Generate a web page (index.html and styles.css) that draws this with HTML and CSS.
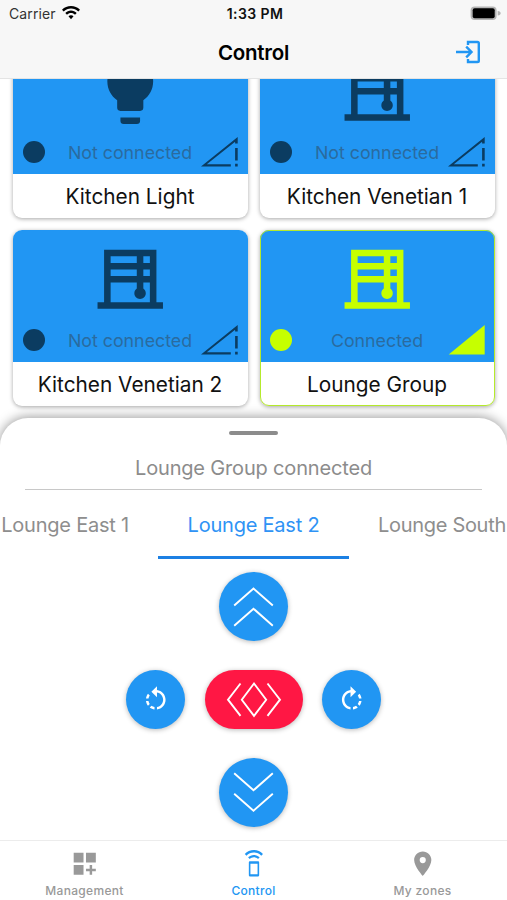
FILE: index.html
```html
<!DOCTYPE html>
<html lang="en">
<head>
    <meta charset="UTF-8">
    <meta name="viewport" content="width=device-width, initial-scale=1.0">
    <title>Control</title>
    <link rel="stylesheet" href="styles.css">
</head>
<body>
    <!-- Shared icons -->
    <svg class="sprite">
        <symbol id="blinds" viewBox="0 0 24 24">
            <path d="M20 19V3H4v16H2v2h20v-2zM16 9h2v2h-2zM14 11H6V9h8zM18 7h-2V5h2zM14 5v2H6V5zM6 19v-6h8v1.82c-.45.32-.75.84-.75 1.43 0 .97.78 1.75 1.75 1.75s1.75-.78 1.75-1.75c0-.59-.3-1.12-.75-1.43V13h2v6z"/>
        </symbol>
        <symbol id="bulb" viewBox="0 0 24 24">
            <path d="M12 2A7 7 0 0 0 5 9c0 2.38 1.19 4.47 3 5.74V17a1 1 0 0 0 1 1h6a1 1 0 0 0 1-1v-2.26c1.81-1.27 3-3.36 3-5.74a7 7 0 0 0-7-7zM9 21a1 1 0 0 0 1 1h4a1 1 0 0 0 1-1v-1H9z"/>
        </symbol>
        <symbol id="signal-off" viewBox="0 0 37 30">
            <path fill-rule="evenodd" d="M0 29.5L36.7 0v6.5h-2.6V4.8L5.8 27.2h24v2.3zM34.1 11h2.6v12.5h-2.6zM34.1 26.8h2.6v2.7h-2.6z"/>
        </symbol>
        <symbol id="signal-on" viewBox="0 0 37 30">
            <path d="M.7 29.5L36.7 0v29.5z"/>
        </symbol>
    </svg>

    <div class="screen">
        <header class="header">
            <div class="status-bar">
                <div class="carrier">
                    Carrier
                    <svg width="18" height="14" viewBox="0 0 18 14">
                        <path d="M9 0C5.6 0 2.4 1.3 0 3.7l1.7 1.8C3.7 3.6 6.2 2.5 9 2.5s5.3 1.1 7.3 3L18 3.7C15.6 1.3 12.4 0 9 0z"/>
                        <path d="M9 4.6c-2.2 0-4.2.9-5.700 2.400L5 8.800c1.100-1 2.500-1.700 4-1.700s2.900.7 4 1.700L14.700 7C13.200 5.500 11.200 4.600 9 4.600z"/>
                        <path d="M9 9.200c-1 0-1.900.4-2.500 1.100L9 13.300l2.500-3C10.900 9.600 10 9.200 9 9.200z"/>
                    </svg>
                </div>
                <div class="time">1:33 PM</div>
                <svg class="battery" width="31" height="15" viewBox="0 0 31 15">
                    <rect x=".6" y=".6" width="26" height="13.400" rx="4" fill="#b4b4b4"/>
                    <path d="M27.700 5c2 .3 3 1.200 3 2.300s-1 2-3 2.300z" fill="#b4b4b4"/>
                    <rect x="2.700" y="2.300" width="22" height="10" rx="2"/>
                </svg>
            </div>
            <div class="title-bar">
                <h1>Control</h1>
                <svg class="login" width="26" height="24" viewBox="0 0 26 24">
                    <path d="M13 5V2h9.500q1.300 0 1.300 1.300v17.400q0 1.300-1.300 1.300H13v-3M1 12h15.500M11.200 6.700l5.300 5.300-5.300 5.300"/>
                </svg>
            </div>
        </header>

        <main class="devices">
            <div class="card">
                <div class="card-image">
                    <svg class="card-icon"><use href="#bulb"/></svg>
                    <div class="card-status">
                        <span class="dot"></span>
                        <span class="state">Not connected</span>
                        <svg class="signal"><use href="#signal-off"/></svg>
                    </div>
                </div>
                <div class="card-name">Kitchen Light</div>
            </div>
            <div class="card">
                <div class="card-image">
                    <svg class="card-icon"><use href="#blinds"/></svg>
                    <div class="card-status">
                        <span class="dot"></span>
                        <span class="state">Not connected</span>
                        <svg class="signal"><use href="#signal-off"/></svg>
                    </div>
                </div>
                <div class="card-name">Kitchen Venetian 1</div>
            </div>
            <div class="card">
                <div class="card-image">
                    <svg class="card-icon"><use href="#blinds"/></svg>
                    <div class="card-status">
                        <span class="dot"></span>
                        <span class="state">Not connected</span>
                        <svg class="signal"><use href="#signal-off"/></svg>
                    </div>
                </div>
                <div class="card-name">Kitchen Venetian 2</div>
            </div>
            <div class="card connected">
                <div class="card-image">
                    <svg class="card-icon"><use href="#blinds"/></svg>
                    <div class="card-status">
                        <span class="dot"></span>
                        <span class="state">Connected</span>
                        <svg class="signal"><use href="#signal-on"/></svg>
                    </div>
                </div>
                <div class="card-name">Lounge Group</div>
            </div>
        </main>

        <section class="sheet">
            <div class="handle"></div>
            <div class="sheet-title">Lounge Group connected</div>
            <div class="tabs">
                <div class="tab prev">Lounge East 1</div>
                <div class="tab active">Lounge East 2</div>
                <div class="tab next">Lounge South</div>
            </div>
            <div class="controls">
                <button class="btn big" aria-label="Up">
                    <svg width="69" height="69" viewBox="0 0 69 69">
                        <path d="M15.200 33.500l19.300-17 19.300 17M15.200 53.700l19.300-17 19.300 17"/>
                    </svg>
                </button>
                <div class="controls-row">
                    <button class="btn small" aria-label="Rotate left">
                        <svg width="29.500" height="29.500" viewBox="0 0 24 24">
                            <path d="M7.110 8.530L5.700 7.110C4.800 8.270 4.240 9.610 4.070 11h2.020c.14-.87.49-1.720 1.020-2.470zM6.090 13H4.070c.17 1.390.72 2.730 1.620 3.890l1.410-1.420c-.52-.75-.87-1.590-1.010-2.470zm1.010 5.320c1.160.9 2.510 1.440 3.900 1.610V17.900c-.87-.15-1.710-.49-2.460-1.030L7.100 18.320zM13 4.070V1L8.450 5.550 13 10V6.090c2.840.48 5 2.940 5 5.910s-2.160 5.430-5 5.910v2.020c3.950-.49 7-3.850 7-7.930s-3.050-7.440-7-7.930z"/>
                        </svg>
                    </button>
                    <button class="btn stop" aria-label="Stop">
                        <svg width="98" height="59" viewBox="0 0 98 59">
                            <path d="M35.500 13.500L23 29.700l12.500 16.200M49 13.500l12.200 16.200L49 45.900 36.800 29.700zM62.500 13.500L75 29.700 62.500 45.900"/>
                        </svg>
                    </button>
                    <button class="btn small" aria-label="Rotate right">
                        <svg width="29.500" height="29.500" viewBox="0 0 24 24">
                            <path d="M15.550 5.550L11 1v3.070C7.060 4.560 4 7.920 4 12s3.050 7.440 7 7.930v-2.020c-2.840-.48-5-2.940-5-5.910s2.160-5.430 5-5.910V10l4.550-4.450zM19.930 11c-.17-1.390-.72-2.730-1.620-3.890l-1.420 1.420c.54.75.88 1.600 1.020 2.470h2.020zM13 17.900v2.020c1.390-.17 2.740-.71 3.900-1.610l-1.440-1.440c-.75.54-1.590.89-2.460 1.030zm3.890-2.420l1.420 1.410c.9-1.160 1.450-2.500 1.620-3.890h-2.020c-.14.87-.48 1.720-1.020 2.480z"/>
                        </svg>
                    </button>
                </div>
                <button class="btn big" aria-label="Down">
                    <svg width="69" height="69" viewBox="0 0 69 69">
                        <path d="M15.200 15.300l19.300 17 19.300-17M15.200 35.700l19.300 17 19.300-17"/>
                    </svg>
                </button>
            </div>
        </section>

        <nav class="nav">
            <div class="nav-item">
                <svg viewBox="0 0 24 24"><path d="M3 3h8v8H3zM13 3h8v8h-8zM3 13h8v8H3zM16 13h2v3h3v2h-3v3h-2v-3h-3v-2h3z"/></svg>
                Management
            </div>
            <div class="nav-item active">
                <svg viewBox="0 0 24 24">
                    <path fill-rule="evenodd" d="M9 10h6.400c.55 0 1 .45 1 1v10.400c0 .55-.45 1-1 1H9c-.55 0-1-.45-1-1V11c0-.55.45-1 1-1zm.3 2v8.600h5.800V12z"/>
                    <path d="M7.400 6.800l1.300 1.400c.9-.8 2.100-1.400 3.400-1.400s2.500.6 3.400 1.400l1.300-1.400c-1.200-1.100-2.900-1.900-4.700-1.900s-3.500.8-4.700 1.900zM12.100.9c-2.900 0-5.500 1.200-7.400 3.100l1.400 1.400c1.500-1.500 3.700-2.500 6-2.500s4.500 1 6 2.500L19.500 4c-1.900-1.900-4.500-3.100-7.400-3.100z"/>
                </svg>
                Control
            </div>
            <div class="nav-item">
                <svg viewBox="0 0 24 24"><path d="M12 2C8.130 2 5 5.130 5 9c0 5.250 7 13 7 13s7-7.750 7-13c0-3.870-3.130-7-7-7zm0 9.500a2.500 2.500 0 1 1 0-5 2.500 2.500 0 0 1 0 5z"/></svg>
                My zones
            </div>
        </nav>
    </div>
</body>
</html>
```
FILE: styles.css
```css
* {
    box-sizing: border-box;
}
body {
    font-family: Inter, 'Liberation Sans', sans-serif;
    margin: 0;
    background-color: #fff;
    color: #111;
}
.sprite {
    display: none;
}
.screen {
    display: flex;
    flex-direction: column;
    height: 900px;
    overflow: hidden;
}

/* Header */
.header {
    height: 79px;
    flex-shrink: 0;
    background: #f7f7f7;
    border-bottom: 1px solid #e4e4e4;
}
.status-bar {
    display: grid;
    grid-template-columns: 1fr auto 1fr;
    align-items: center;
    height: 27px;
    padding: 0 6px 0 9px;
    font-size: 14px;
}
.carrier {
    display: flex;
    align-items: center;
    gap: 6px;
    letter-spacing: 0.1px;
    color: #333;
}
.carrier svg {
    fill: #000;
    margin-top: -2px;
}
.time {
    font-weight: 600;
    letter-spacing: 0.4px;
}
.battery {
    justify-self: end;
}
.title-bar {
    display: grid;
    grid-template-columns: 1fr auto 1fr;
    align-items: center;
    height: 50px;
    padding: 0 26px;
}
.title-bar h1 {
    grid-column: 2;
    margin: 0;
    font-size: 20.5px;
    font-weight: 600;
    letter-spacing: -0.25px;
    color: #000;
}
.login {
    justify-self: end;
    fill: none;
    stroke: #2196f3;
    stroke-width: 2.4;
}

/* Device cards */
.devices {
    display: grid;
    grid-template-columns: 235px 235px;
    gap: 12px;
    justify-content: center;
    align-content: end;
    height: 339px;
    flex-shrink: 0;
    padding-bottom: 12px;
    overflow: hidden;
}
.card {
    height: 176px;
    border-radius: 9px;
    background: #fff;
    box-shadow: 0 1px 4px rgba(0, 0, 0, 0.35);
    overflow: hidden;
}
.card-image {
    height: 132px;
    padding: 9.5px 10px 0;
    background: #2196f3;
    color: #0b3c61;
}
.card-icon {
    display: block;
    width: 78.5px;
    height: 78.5px;
    margin: 0 auto;
    fill: currentColor;
}
.card-status {
    display: grid;
    grid-template-columns: 37px 1fr 37px;
    align-items: center;
    margin-top: 7px;
}
.dot {
    width: 22px;
    height: 22px;
    border-radius: 50%;
    background: currentColor;
}
.state {
    text-align: center;
    font-size: 17.8px;
    color: #2a6b9f;
    white-space: nowrap;
}
.signal {
    width: 37px;
    height: 30px;
    fill: currentColor;
}
.card-name {
    height: 44px;
    line-height: 45px;
    text-align: center;
    font-size: 20.8px;
}
.connected {
    outline: 1.5px solid #b5ea2c;
    outline-offset: -1px;
}
.connected .card-image {
    color: #c6ff00;
}

/* Bottom sheet */
.sheet {
    position: relative;
    height: 422px;
    flex-shrink: 0;
    padding-top: 13px;
    border-radius: 28px 28px 0 0;
    background: #fff;
    box-shadow: 0 -1px 12px rgba(0, 0, 0, 0.4);
}
.handle {
    width: 49px;
    height: 4px;
    margin: 0 auto;
    border-radius: 2px;
    background: #8c8c8c;
}
.sheet-title {
    height: 55px;
    margin: 0 25px;
    padding-top: 11px;
    line-height: 44px;
    border-bottom: 1px solid #c8c8c8;
    text-align: center;
    font-size: 20px;
    letter-spacing: -0.17px;
    color: #8c8c8c;
}
.tabs {
    display: flex;
    height: 69px;
}
.tab {
    flex: 0 0 191px;
    line-height: 71px;
    text-align: center;
    font-size: 20px;
    letter-spacing: -0.22px;
    color: #8e8e8e;
    white-space: nowrap;
}
.tab.prev,
.tab.next {
    flex: 1;
}
.tab.prev {
    text-align: right;
    padding-right: 29px;
}
.tab.next {
    text-align: left;
    padding-left: 29px;
    letter-spacing: -0.3px;
}
.tab.active {
    color: #2f93f5;
    border-bottom: 3px solid #1c80e3;
}
.controls {
    display: flex;
    flex-direction: column;
    align-items: center;
    gap: 29px;
    padding-top: 13px;
}
.controls-row {
    display: flex;
    gap: 19.5px;
}
.btn {
    display: flex;
    align-items: center;
    justify-content: center;
    height: 59px;
    padding: 0;
    border: none;
    border-radius: 35px;
    background: #2196f3;
    box-shadow: 0 1px 5px rgba(0, 0, 0, 0.28);
    fill: none;
    stroke: #fff;
    stroke-width: 1.9;
}
.big {
    width: 69px;
    height: 69px;
}
.small {
    width: 59px;
    fill: #fff;
    stroke: none;
}
.stop {
    width: 98px;
    background: #ff1744;
}

/* Bottom navigation */
.nav {
    position: relative;
    display: flex;
    height: 60px;
    background: #fff;
    border-top: 1px solid #ececec;
}
.nav-item {
    flex: 1;
    display: flex;
    flex-direction: column;
    align-items: center;
    padding-top: 7.5px;
    font-size: 12px;
    font-weight: 500;
    line-height: 15px;
    letter-spacing: 0.3px;
    color: #999;
}
.nav-item svg {
    width: 29.5px;
    height: 29.5px;
    margin-bottom: 4.5px;
    fill: currentColor;
}
.nav-item.active {
    color: #2196f3;
}
```
